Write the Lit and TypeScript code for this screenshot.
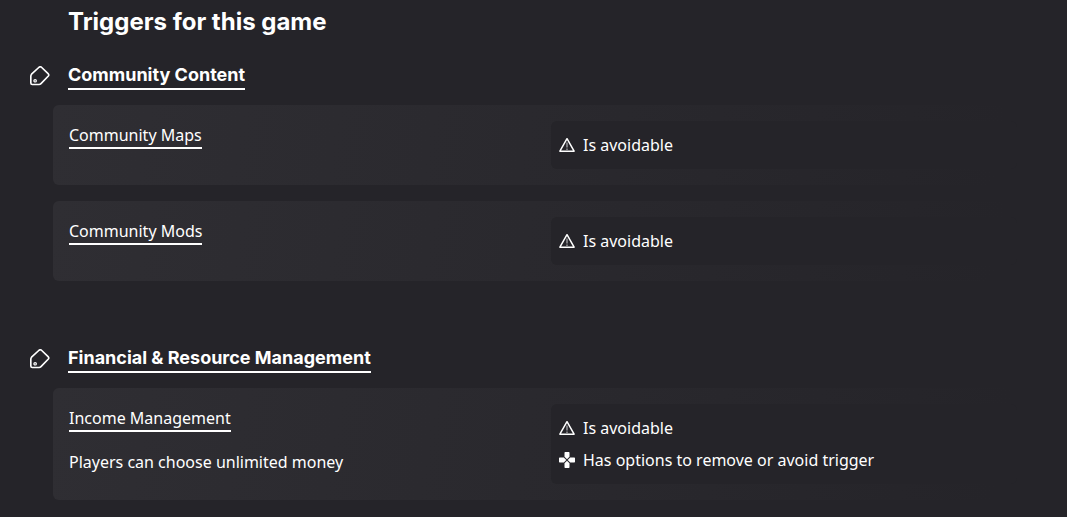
import { LitElement, html, css, svg } from "lit";
import { customElement, property } from "lit/decorators.js";

type Note = { icon: "warning" | "dpad"; text: string };
type Trigger = { name: string; comment?: string; notes: Note[] };
type Category = { name: string; triggers: Trigger[] };

const avoidable: Note = { icon: "warning", text: "Is avoidable" };

const categories: Category[] = [
  {
    name: "Community Content",
    triggers: [
      { name: "Community Maps", notes: [avoidable] },
      { name: "Community Mods", notes: [avoidable] },
    ],
  },
  {
    name: "Financial & Resource Management",
    triggers: [
      {
        name: "Income Management",
        comment: "Players can choose unlimited money",
        notes: [avoidable, { icon: "dpad", text: "Has options to remove or avoid trigger" }],
      },
    ],
  },
];

const warningIcon = svg`
  <path d="M8 1.700 15.100 14.200H.9Z" fill="none" stroke="#fff" stroke-width="1.500" stroke-linejoin="round"/>
  <path d="M8 5.500v5M8 11.400v1.600" fill="none" stroke="#8e8e92" stroke-width="1.600"/>`;

const dpadIcon = svg`
  <path fill="#fff" d="M6.200 0h3.600q.7 0 .7.7v4.100L8 7.300 5.500 4.800V.7q0-.7.7-.7ZM6.200 16h3.600q.7 0 .7-.7v-4.100L8 8.700l-2.500 2.500v4.100q0 .7.7.7ZM0 6.200v3.600q0 .7.7.7h4.100L7.300 8 4.800 5.500H.7q-.7 0-.7.7ZM16 6.200v3.600q0 .7-.7.7h-4.100L8.700 8l2.500-2.500h4.100q.7 0 .7.7Z"/>`;

@customElement("trigger-card")
export class TriggerCard extends LitElement {
  @property({ attribute: false }) trigger!: Trigger;

  static styles = css`
    :host {
      display: grid;
      grid-template-columns: 1fr 1fr;
      column-gap: 16px;
      padding: 16px;
      border-radius: 6px;
      background: linear-gradient(100deg, #2f2e33, #252429 96%);
    }
    .name {
      display: inline-block;
      padding-top: 2px;
      line-height: 24px;
      color: #fff;
      text-decoration: none;
      border-bottom: 2px solid #fff;
    }
    .comment {
      margin: 0;
      padding-top: 14px;
      line-height: 32px;
    }
    .info {
      display: flex;
      flex-direction: column;
      align-items: flex-start;
    }
    .notes {
      margin: 0;
      padding: 8px;
      list-style: none;
      border-radius: 6px;
      background: #252429;
    }
    .note {
      display: flex;
      align-items: center;
      gap: 8px;
      line-height: 32px;
    }
    .icon {
      width: 16px;
      height: 16px;
      flex: none;
    }
  `;

  render() {
    const { name, comment, notes } = this.trigger;
    return html`
      <div class="info">
        <a class="name" href="#">${name}</a>
        ${comment ? html`<p class="comment">${comment}</p>` : null}
      </div>
      <ul class="notes">
        ${notes.map(
          (n) => html`<li class="note">
            <svg class="icon" viewBox="0 0 16 16" aria-hidden="true">
              ${n.icon === "warning" ? warningIcon : dpadIcon}
            </svg>
            <span>${n.text}</span>
          </li>`
        )}
      </ul>
    `;
  }
}

@customElement("app-root")
export class AppRoot extends LitElement {
  static styles = css`
    :host {
      display: block;
      box-sizing: border-box;
      min-height: 100vh;
      padding: 6px 34px 17px 30px;
      background: #252429;
      color: #fff;
      font: 16px/32px "Noto Sans", sans-serif;
    }
    .title,
    .category-title {
      margin: 0;
      font-family: Inter, sans-serif;
      font-weight: 700;
    }
    .title {
      padding-left: 38px;
      font-size: 24px;
      line-height: 32px;
    }
    .category {
      margin-top: 24px;
    }
    .category + .category {
      margin-top: 64px;
    }
    .category-title {
      display: flex;
      align-items: center;
      gap: 18px;
      font-size: 18px;
      line-height: 26px;
    }
    .tag {
      width: 20px;
      height: 20px;
      flex: none;
    }
    .category-link {
      color: #fff;
      text-decoration: none;
      border-bottom: 2px solid #fff;
    }
    .cards {
      display: grid;
      gap: 16px;
      margin: 15px 0 0 23px;
    }
  `;

  render() {
    return html`
      <main>
        <h2 class="title">Triggers for this game</h2>
        ${categories.map(
          (c) => html`<section class="category">
            <h3 class="category-title">
              <svg class="tag" viewBox="0.5 0.8 19.5 19.5" fill="none" stroke="#fff" aria-hidden="true">
                <path
                  stroke-width="1.600"
                  stroke-linejoin="round"
                  d="M2 8.800 9.300 2Q10.500 1.100 11.700 2L18.400 8.500Q19.200 9.500 18.400 10.500L11.200 18Q10.400 18.800 9.300 18.800H2.800Q1.300 18.800 1.300 17.300V10.700Q1.300 9.600 2 8.800Z"
                />
                <circle cx="5.500" cy="15.200" r="1.200" stroke-width="1.200" />
              </svg>
              <a class="category-link" href="#">${c.name}</a>
            </h3>
            <div class="cards">
              ${c.triggers.map((t) => html`<trigger-card .trigger=${t}></trigger-card>`)}
            </div>
          </section>`
        )}
      </main>
    `;
  }
}
